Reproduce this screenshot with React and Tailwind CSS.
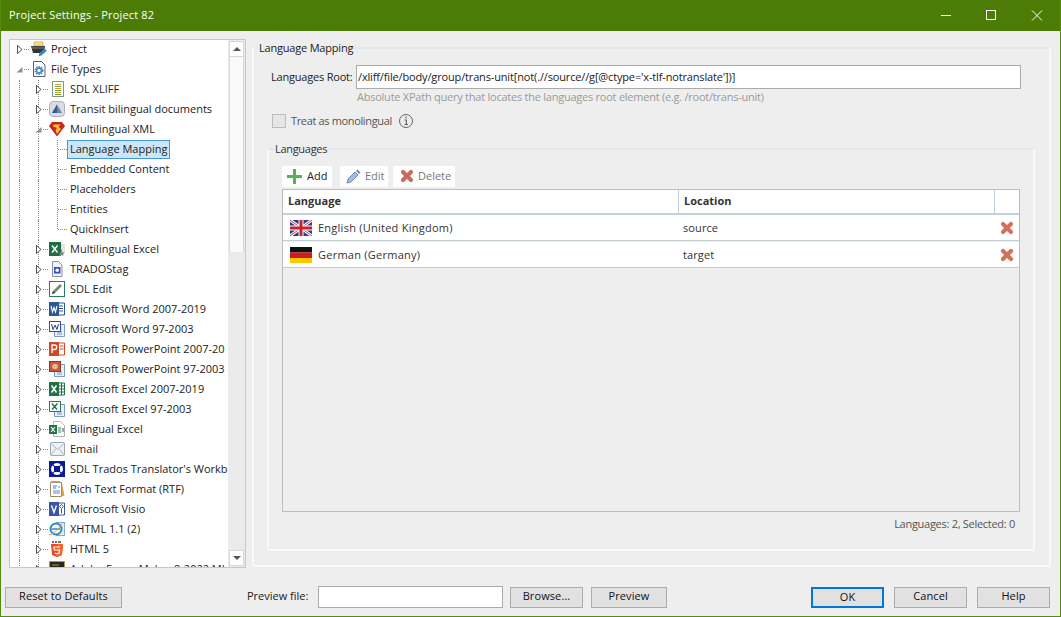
const S = ({ children, w = 16, h = 16 }) => (
  <svg width={w} height={h} viewBox={`0 0 ${w} ${h}`} className="shrink-0 block">{children}</svg>
);

const icons = {
  project: <S><path d="M3 1h9v4H3z" fill="#f6dc8a" stroke="#c9a040" strokeWidth=".7" /><path d="M0 5h14l-1 7H2z" fill="#333" /><path d="M1 5.500h12.500V8H1z" fill="#5c5c5c" /><path d="M7.500 15.500l1-3.500 5-4.500 2.300 2.200-5 4.500z" fill="#3d84c9" /></S>,
  files: <S><path d="M2.500.5h8l3.500 3.500v11.500H2.500z" fill="#fff" stroke="#55606c" /><circle cx="8" cy="9.500" r="3.600" fill="none" stroke="#3d7fc4" strokeWidth="1.800" strokeDasharray="1.500 .8" /><circle cx="8" cy="9.500" r="2.300" fill="none" stroke="#2f78c2" strokeWidth="1.200" /></S>,
  xliff: <S><rect x="3.500" y=".5" width="11" height="15" fill="#fff" stroke="#7e9a7e" /><path d="M6 3.500h6" stroke="#d89b26" /><path d="M6 5.500h6" stroke="#5aa546" /><path d="M6 7.500h6" stroke="#d89b26" /><path d="M6 9.500h6" stroke="#5aa546" /><path d="M6 11.500h6" stroke="#d89b26" /><path d="M6 13.500h6" stroke="#5aa546" /></S>,
  transit: <S><rect x=".5" y=".5" width="15" height="15" rx="3.500" fill="#d9dce1" stroke="#aeb2b8" /><path d="M8 3.500l5 8.500H3z" fill="#6a82ad" /><path d="M8 3.500V12H3z" fill="#3c5a90" /></S>,
  xml: <S><path d="M3 1h10l3 4-8 10.500L0 5z" fill="#c5271a" /><path d="M4.500 3.500h7L9.500 6l2.500 2-4 5-1.500-3.500L8 7 4 5.500z" fill="#f3c22f" /></S>,
  mlexcel: <S><rect y="1" width="12" height="14" fill="#1f6e43" /><path d="M3 4.500l5.500 7M8.500 4.500l-5.500 7" stroke="#fff" strokeWidth="1.500" /><rect x="12" y="3" width="4" height="8" fill="#e4e4e4" /><path d="M10 15l2.500-7 1 3.500 2.500 0-2 2 .5 1.500-2-1z" fill="#7c8a80" /></S>,
  tag: <S><path d="M3.500.5h6l3.500 3.500v11.500h-9.500z" fill="#f3f4fa" stroke="#8a8fa8" /><rect x="5" y="6" width="6.500" height="6.500" fill="#3550b5" /><circle cx="8.200" cy="9.200" r="1.800" fill="#fff" /></S>,
  edit: <S><rect x=".5" y=".5" width="15" height="15" fill="#fff" stroke="#2a7a66" /><path d="M3 13l1-3 7-7 2 2-7 7z" fill="#6f8f72" /><path d="M3 13l1-3 2 2z" fill="#333" /></S>,
  word: <S><path d="M7 2h8.500v12H7z" fill="#fff" stroke="#2b579a" /><path d="M10 5h4M10 7.500h4M10 10h4" stroke="#2b579a" /><rect y="1" width="10" height="14" fill="#2b579a" /><path d="M2 5l1.500 6L5 6.500 6.500 11 8 5" stroke="#fff" strokeWidth="1.100" fill="none" /></S>,
  word97: <S><path d="M5.500 3.500h10v12h-10z" fill="#e8eff8" stroke="#7f9ac0" /><path d="M8 11h5M8 13h5" stroke="#7f9ac0" /><rect x=".5" y=".5" width="11" height="10" fill="#fff" stroke="#2b4f9e" /><path d="M2.500 3l1.500 5.500 2-4.500 2 4.500 1.500-5.500" stroke="#1d3f9a" fill="none" /></S>,
  ppt: <S><path d="M7 2h8.500v12H7z" fill="#fff" stroke="#d24726" /><path d="M11 5h3.500M11 8h3.500" stroke="#d24726" /><rect y="1" width="10" height="14" fill="#d24726" /><path d="M3 12V4h2.500a2 2 0 010 4.500H3" stroke="#fff" strokeWidth="1.300" fill="none" /></S>,
  ppt97: <S><path d="M5.500 3.500h10v12h-10z" fill="#e8eff8" stroke="#7f9ac0" /><path d="M8 11h5M8 13h5" stroke="#7f9ac0" /><rect x=".5" y=".5" width="11" height="10" fill="#c85a3c" stroke="#8c3a22" /><circle cx="6" cy="5.500" r="2.800" fill="#eeb49c" /></S>,
  excel: <S><path d="M7 2h8.500v12H7z" fill="#fff" stroke="#217346" /><path d="M10 5h5M10 8h5M10 11h5M12.500 2v12" stroke="#217346" /><rect y="1" width="10" height="14" fill="#217346" /><path d="M2.500 4.500l5 7M7.500 4.500l-5 7" stroke="#fff" strokeWidth="1.500" /></S>,
  excel97: <S><path d="M5.500 3.500h10v12h-10z" fill="#e8eff8" stroke="#7f9ac0" /><path d="M8 11h5M8 13h5" stroke="#7f9ac0" /><rect x=".5" y=".5" width="11" height="10" fill="#fff" stroke="#2f7d4a" /><path d="M3 2.500l5 6M8.500 2.500l-5.500 6" stroke="#217346" strokeWidth="1.400" /></S>,
  biexcel: <S><path d="M4.500.5h7l4 4v11h-11z" fill="#fff" stroke="#b0b4b8" /><rect y="4" width="8" height="9" fill="#217346" /><path d="M2 6l4 5M6 6l-4 5" stroke="#fff" strokeWidth="1.200" /><rect x="9" y="6" width="3" height="6" fill="#9cc7ae" /><path d="M13 7l2 4M15 7l-2 4" stroke="#888" /></S>,
  email: <S><rect x="1.500" y="1.500" width="14" height="13" rx="1" fill="#eef2f6" stroke="#9aa6b2" /><path d="M2 2.500l6.500 6 6.500-6M2 14l5-6.500M15 14l-5-6.500" stroke="#aeb8c2" fill="none" /></S>,
  workbench: <S><rect width="16" height="16" fill="#0a1a9c" /><circle cx="8" cy="8" r="6" fill="#fff" /><rect x="5" y="5" width="6" height="6" fill="#0a1a9c" /><path d="M2 2l3 3M14 2l-3 3M2 14l3-3M14 14l-3-3" stroke="#0a1a9c" strokeWidth="1.500" /></S>,
  rtf: <S><path d="M1.500 1.500h11v14h-11z" fill="#fff" stroke="#9a8a70" /><path d="M2 .5h9" stroke="#c9a050" strokeWidth="2" /><path d="M13 2l2.500 13H13z" fill="#d8a640" /><path d="M4 5h4M4 7h3" stroke="#3f7fc4" /><path d="M4 10h7M4 12h7M9 6h2" stroke="#5a8abf" /></S>,
  visio: <S><path d="M7 2h8.500v12H7z" fill="#fff" stroke="#3955a3" /><path d="M12.500 3.500l2 2-2 2-2-2zM12.500 8v4" stroke="#3955a3" fill="none" /><rect y="1" width="10" height="14" fill="#3955a3" /><path d="M2.500 4.500L5 11.500l2.500-7" stroke="#fff" strokeWidth="1.400" fill="none" /></S>,
  xhtml: <S><rect x="7.500" y="1.500" width="8" height="13" fill="#e4edf6" stroke="#8aa8c8" /><circle cx="7" cy="8" r="5.500" fill="#fff" stroke="#2a88d8" strokeWidth="2" /><path d="M3 8h8" stroke="#2a88d8" strokeWidth="1.500" /><path d="M0 13.500c3 1 10-6 13-11" stroke="#e8a030" fill="none" /></S>,
  html5: <S><path d="M3 1h2M6 1h2M9 1h3" stroke="#444" strokeWidth="1.400" /><path d="M2 3h12l-1 11-5 2-5-2z" fill="#e44d26" /><path d="M8 3h6l-1 11-5 2z" fill="#f16529" /><path d="M11 6H5l.3 3h5.200l-.3 3L8 12.800 5.800 12" stroke="#fff" strokeWidth="1.200" fill="none" /></S>,
  frame: <S><rect x=".5" y=".5" width="15" height="15" fill="#2a2618" stroke="#b09a50" /><path d="M3 4h7" stroke="#b09a50" /></S>,
};

const Guide = () => <span className="w-[19px] h-full shrink-0 pl-[6px]"><span className="block h-full border-l border-dotted border-[#8c8c8c]" /></span>;

const Expander = ({ open, noLine, w }) => (
  <svg width={w} height="20" viewBox={`0 0 ${w} 20`} className="shrink-0 block">
    {!noLine && <path d="M6.500 0V20" stroke="#8c8c8c" strokeDasharray="1 1" />}
    <path d="M11 9.500H17" stroke="#8c8c8c" strokeDasharray="1 1" />
    {open ? (
      <path d="M3.500 12.500L9.500 12.500 9.500 7z" fill="#8e8e8e" />
    ) : (
      <path d="M4.500 5.500L9 9.500 4.500 13.500z" fill="#fff" stroke="#555" />
    )}
    {!open && <path d="M4.500 5.500v8" stroke="#555" />}
  </svg>
);

const Elbow = ({ last }) => (
  <svg width="16" height="20" viewBox="0 0 16 20" className="shrink-0 block">
    <path d={last ? "M6.500 0V9.500" : "M6.500 0V20"} stroke="#8c8c8c" strokeDasharray="1 1" />
    <path d="M7 9.500H16" stroke="#8c8c8c" strokeDasharray="1 1" />
  </svg>
);

const Node = ({ level = 1, icon, open, children, noLine }) => (
  <div className="h-5 flex items-center pl-[3px] whitespace-nowrap">
    {level === 1 && <Guide />}
    <Expander open={open} noLine={noLine} w={level === 1 ? 17 : 18} />
    <span className="pb-[2px]">{icons[icon]}</span>
    <span className={level === 1 ? "ml-[5px] pb-[2px]" : "ml-1 pb-[2px]"}>{children}</span>
  </div>
);

const Leaf = ({ children, selected, last }) => (
  <div className="h-5 flex items-start pl-[3px] whitespace-nowrap">
    <Guide />
    <Guide />
    <Elbow last={last} />
    <span className={selected
      ? "h-[19px] leading-[16px] px-[2px] border border-[#3f9ad6] bg-[#cde6f7]"
      : "h-[19px] leading-[16px] px-[2px] border border-transparent"}>{children}</span>
  </div>
);

const Tree = () => (
  <div className="w-[237px] h-[529px] border border-[#c4c8cc] bg-white flex overflow-hidden">
    <div className="w-[218px] shrink-0 overflow-hidden">
      <Node level={0} icon="project" noLine>Project</Node>
      <Node level={0} icon="files" open noLine>File Types</Node>
      <Node icon="xliff">SDL XLIFF</Node>
      <Node icon="transit">Transit bilingual documents</Node>
      <Node icon="xml" open>Multilingual XML</Node>
      <Leaf selected>Language Mapping</Leaf>
      <Leaf>Embedded Content</Leaf>
      <Leaf>Placeholders</Leaf>
      <Leaf>Entities</Leaf>
      <Leaf last>QuickInsert</Leaf>
      <Node icon="mlexcel">Multilingual Excel</Node>
      <Node icon="tag">TRADOStag</Node>
      <Node icon="edit">SDL Edit</Node>
      <Node icon="word">Microsoft Word 2007-2019</Node>
      <Node icon="word97">Microsoft Word 97-2003</Node>
      <Node icon="ppt">Microsoft PowerPoint 2007-20</Node>
      <Node icon="ppt97">Microsoft PowerPoint 97-2003</Node>
      <Node icon="excel">Microsoft Excel 2007-2019</Node>
      <Node icon="excel97">Microsoft Excel 97-2003</Node>
      <Node icon="biexcel">Bilingual Excel</Node>
      <Node icon="email">Email</Node>
      <Node icon="workbench">SDL Trados Translator's Workb</Node>
      <Node icon="rtf">Rich Text Format (RTF)</Node>
      <Node icon="visio">Microsoft Visio</Node>
      <Node icon="xhtml">XHTML 1.1 (2)</Node>
      <Node icon="html5">HTML 5</Node>
      <Node icon="frame">Adobe FrameMaker 8-2022 MI</Node>
    </div>
    <div className="w-[17px] shrink-0 bg-[#ebebeb] flex flex-col py-px">
      <div className="h-[16px] mx-px bg-white border border-[#d8d8d8] flex items-center justify-center">
        <span className="w-0 h-0 border-x-[4px] border-x-transparent border-b-[4px] border-b-[#555]" />
      </div>
      <div className="h-[195px] mx-px bg-[#fafafa] border-x border-[#d8d8d8]" />
      <div className="flex-1" />
      <div className="h-[16px] mx-px bg-white border border-[#d8d8d8] flex items-center justify-center">
        <span className="w-0 h-0 border-x-[4px] border-x-transparent border-t-[4px] border-t-[#555]" />
      </div>
    </div>
  </div>
);

const RedX = ({ color = "#d4705f" }) => (
  <svg width="14" height="14" viewBox="0 0 14 14" className="shrink-0 block">
    <path d="M3 3l8 8M11 3l-8 8" stroke={color} strokeWidth="4.200" strokeLinecap="round" />
  </svg>
);

const UK = () => (
  <svg width="22" height="16" viewBox="0 0 22 16" className="shrink-0 block">
    <rect width="22" height="16" fill="#2b3f8c" />
    <path d="M0 0l22 16M22 0L0 16" stroke="#fff" strokeWidth="3" />
    <path d="M0 0l22 16M22 0L0 16" stroke="#c8353f" strokeWidth="1" />
    <path d="M11 0v16M0 8h22" stroke="#fff" strokeWidth="5" />
    <path d="M11 0v16M0 8h22" stroke="#c8202f" strokeWidth="3" />
  </svg>
);
const DE = () => (
  <svg width="22" height="16" viewBox="0 0 22 16" className="shrink-0 block">
    <rect width="22" height="5.500" fill="#111" />
    <rect y="5.500" width="22" height="5.500" fill="#d8171c" />
    <rect y="11" width="22" height="5" fill="#fcc800" />
  </svg>
);

const ToolBtn = ({ icon, children, className }) => (
  <div className={"h-[21px] bg-white flex items-center " + className}>{icon}{children}</div>
);

const Row = ({ flag, lang, loc, className = "" }) => (
  <div className={"h-[26px] pt-[2px] grid grid-cols-[396px_316px_24px] bg-white border-b border-[#c3ced3] items-center text-[#333] " + className}>
    <div className="flex items-center gap-[6px] pl-[7px]">{flag}<span className="tracking-[0.25px]">{lang}</span></div>
    <div className="pl-[4px] tracking-[0.1px]">{loc}</div>
    <div className="pl-[5px]"><RedX /></div>
  </div>
);

const Btn = ({ children, className = "" }) => (
  <button className={"h-[21px] pb-px bg-[#e1e1e1] text-[#111] tracking-[0.1px] " + className}>{children}</button>
);

export default function App() {
  return (
    <div className="w-[1061px] h-[617px] flex flex-col bg-[#eeeeee] border-x border-b border-[#558b0f] text-[11px] text-[#222] font-['Open_Sans','Liberation_Sans',sans-serif] overflow-hidden">
      <div className="h-[31px] -mx-px shrink-0 bg-[#4c7c06] text-white flex items-center pl-[9px]">
        <span className="flex-1 tracking-[0.18px]">Project Settings - Project 82</span>
        <svg width="102" height="12" viewBox="0 0 102 12" className="mr-[18px] block" fill="none" stroke="#fff">
          <path d="M0 5.500h10" />
          <rect x="45.500" y=".5" width="9" height="9" />
          <path d="M91 .5l10 10M101 .5l-10 10" />
        </svg>
      </div>

      <div className="flex items-start">
        <div className="ml-2 mt-2"><Tree /></div>

        <fieldset className="ml-[6px] mt-[9px] w-[799px] h-[527px] border-2 border-[#f7f9fb] border-t-[#e2e8ef] rounded-[3px] pl-[5px]">
          <legend className="leading-[16px] tracking-[-0.2px]">Language Mapping</legend>
          <div className="-ml-[5px]">
            <div className="flex items-center mt-[9px] pl-[17px]">
              <span className="w-[85px] whitespace-nowrap tracking-[-0.2px]">Languages Root:</span>
              <div className="w-[665px] h-6 bg-white border border-[#ababab] flex items-center pl-px tracking-[-0.15px] whitespace-nowrap overflow-hidden">/xliff/file/body/group/trans-unit[not(.//source//g[@ctype='x-tlf-notranslate'])]</div>
            </div>
            <div className="pl-[103px] h-4 leading-4 tracking-[-0.24px] text-[#9a9a9a]">Absolute XPath query that locates the languages root element (e.g. /root/trans-unit)</div>
            <div className="flex items-center mt-2 pl-[18px] text-[#555]">
              <span className="w-[14px] h-[14px] bg-[#e6e6e6] border border-[#bcbcbc]" />
              <span className="ml-[5px] tracking-[-0.35px]">Treat as monolingual</span>
              <svg width="16" height="16" viewBox="0 0 16 16" className="ml-[6px] block" fill="none" stroke="#666">
                <circle cx="8" cy="8" r="6.500" />
                <path d="M8 3.500v2M6.500 7H8.300v4.500M6.500 11.500h3.500" strokeWidth="1.200" />
              </svg>
            </div>

            <fieldset className="ml-[13px] mt-[11px] w-[768px] h-[410px] border-2 border-[#f7f9fb] border-t-[#e2e8ef] rounded-[3px] pl-[6px]">
              <legend className="leading-[16px] tracking-[-0.3px] text-[#333]">Languages</legend>
              <div className="-ml-[6px] pl-[13px]">
                <div className="flex mt-[9px] text-[#777]">
                  <ToolBtn className="w-[50px] pl-[5px] text-[#222]" icon={
                    <svg width="15" height="15" viewBox="0 0 15 15" className="mr-[5px] block"><path d="M7.500 0v15M0 7.500h15" stroke="#54b15d" strokeWidth="3" /></svg>
                  }>Add</ToolBtn>
                  <ToolBtn className="w-[48px] ml-2 pl-[6px]" icon={
                    <svg width="15" height="15" viewBox="0 0 15 15" className="mr-[4px] block"><path d="M1 14l1-4 7-7 3 3-7 7z" fill="#a9bbd8" stroke="#6d8bbb" /><path d="M10 2l1.500-1.500 3 3L13 5z" fill="#6d8bbb" /></svg>
                  }>Edit</ToolBtn>
                  <ToolBtn className="w-[62px] ml-[5px] pl-[7px]" icon={<span className="mr-[4px]"><RedX color="#c96a5a" /></span>}>Delete</ToolBtn>
                </div>
                <div className="mt-[2px] w-[738px] h-[323px] border border-[#bdbdbd] flex flex-col">
                  <div className="h-[25px] shrink-0 grid grid-cols-[396px_316px_24px] bg-white border-b-2 border-[#c3d2d8] font-bold text-[#333] items-center">
                    <div className="h-full flex items-center pl-[5px] border-r border-[#c3d2d8]">Language</div>
                    <div className="h-full flex items-center pl-[5px] border-r border-[#c3d2d8]">Location</div>
                    <div />
                  </div>
                  <Row flag={<UK />} lang="English (United Kingdom)" loc="source" />
                  <Row flag={<DE />} lang="German (Germany)" loc="target" className="mt-px" />
                </div>
                <div className="w-[733px] mt-[4px] text-right text-[#555] tracking-[-0.28px] leading-4">Languages: 2, Selected: 0</div>
              </div>
            </fieldset>
          </div>
        </fieldset>
      </div>

      <div className="flex items-center mt-[18px] pl-1">
        <Btn className="w-[117px] border border-[#adadad]">Reset to Defaults</Btn>
        <span className="ml-[125px] w-[71px] pb-px">Preview file:</span>
        <div className="w-[185px] h-[22px] bg-white border border-[#ababab]" />
        <Btn className="w-[73px] ml-[7px] border border-[#adadad]">Browse...</Btn>
        <Btn className="w-[76px] ml-2 border border-[#adadad]">Preview</Btn>
        <Btn className="w-[73px] ml-[144px] border-2 border-[#0078d7]">OK</Btn>
        <Btn className="w-[73px] ml-[10px] border border-[#adadad]">Cancel</Btn>
        <Btn className="w-[73px] ml-[10px] border border-[#adadad]">Help</Btn>
      </div>
    </div>
  );
}
